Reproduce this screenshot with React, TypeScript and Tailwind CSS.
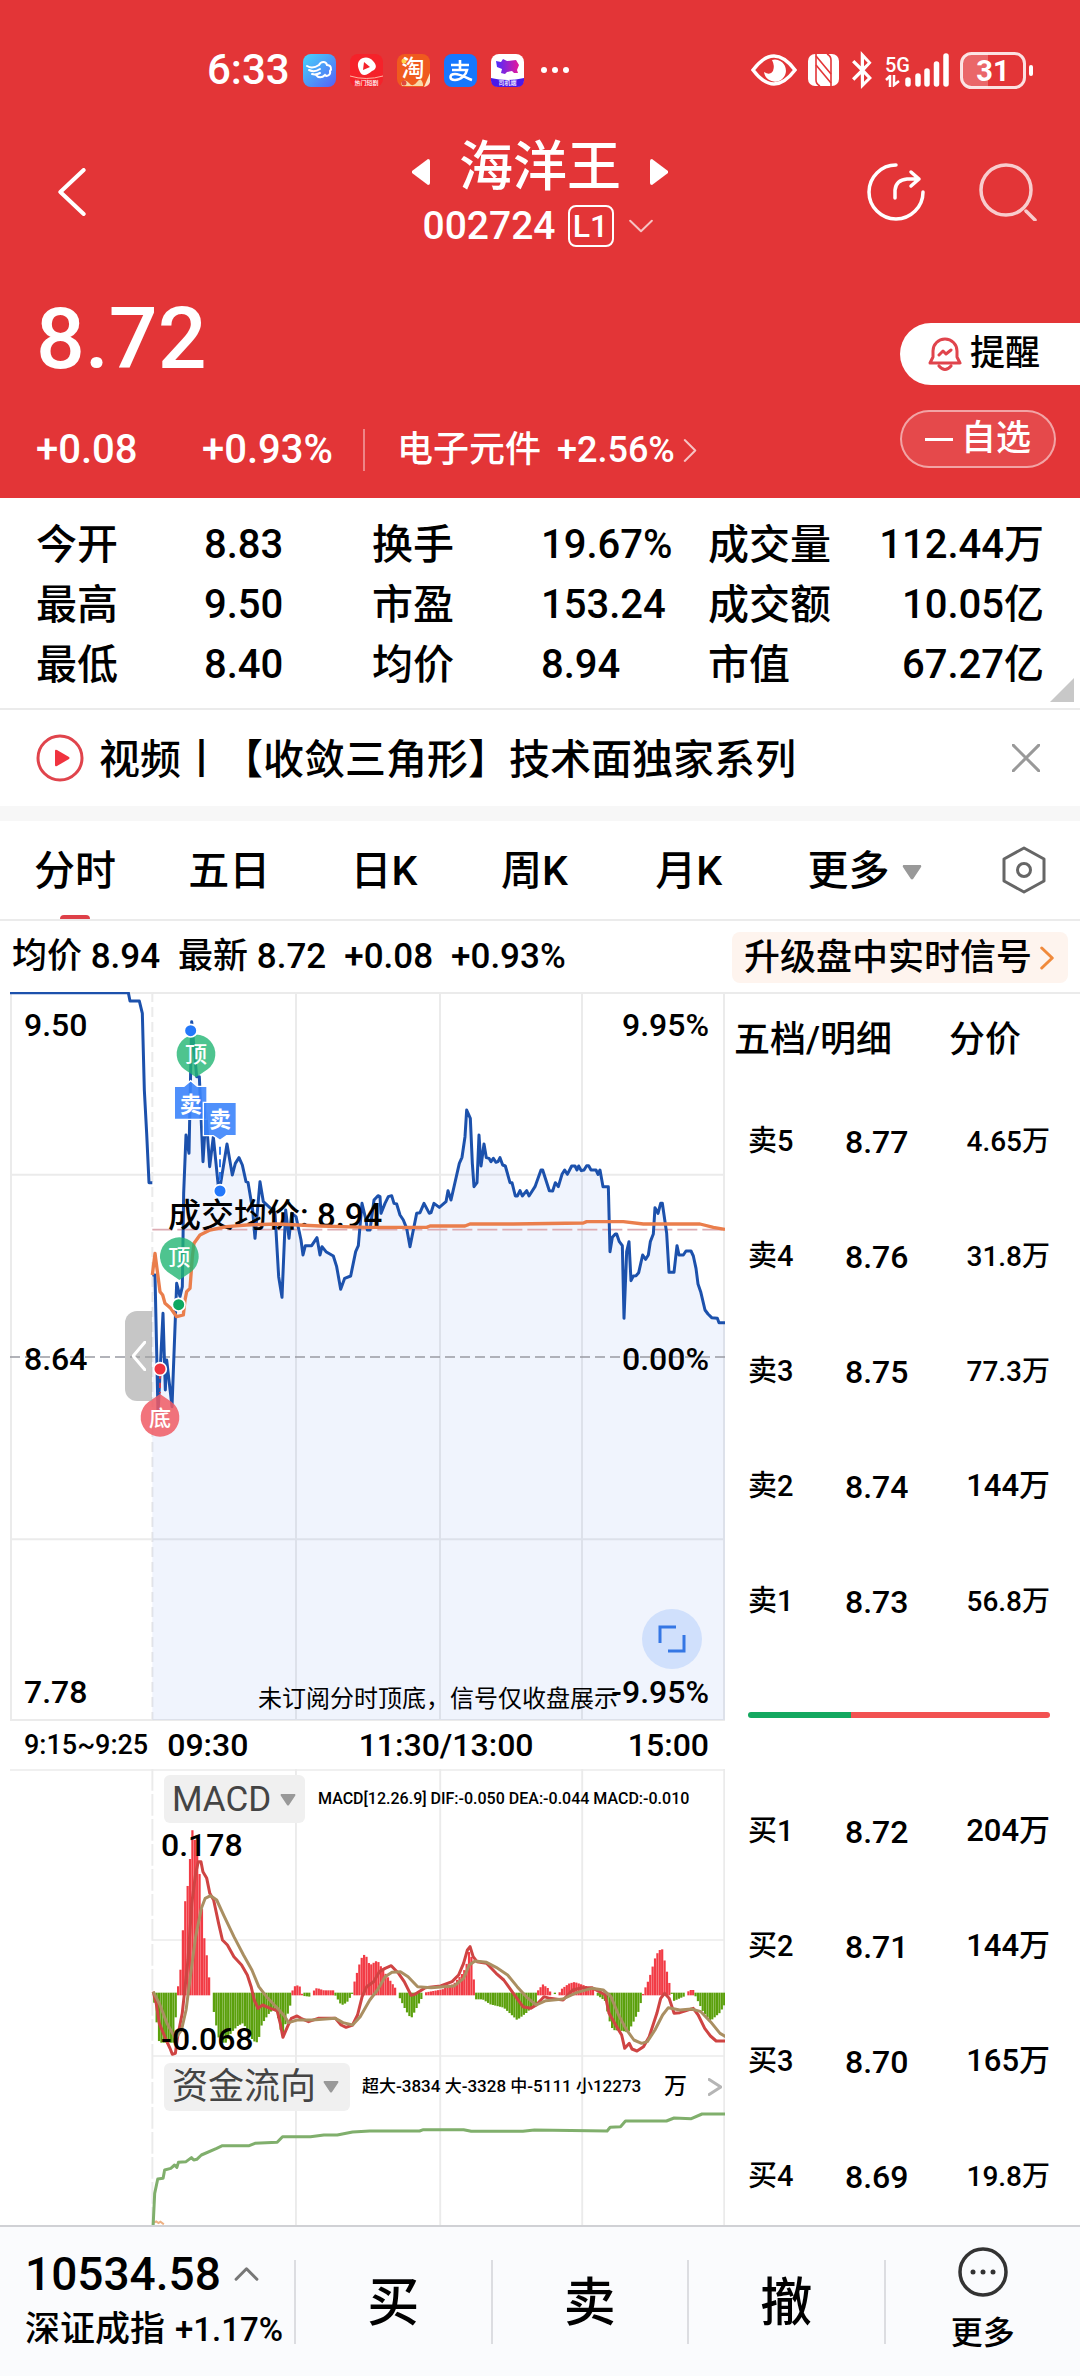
import React from 'react';
import { FaBluetoothB } from 'react-icons/fa';

const stats = [
  ['今开', '8.83', '换手', '19.67%', '成交量', '112.44万'],
  ['最高', '9.50', '市盈', '153.24', '成交额', '10.05亿'],
  ['最低', '8.40', '均价', '8.94', '市值', '67.27亿'],
];

const asks = [
  ['卖5', '8.77', '4.65万'],
  ['卖4', '8.76', '31.8万'],
  ['卖3', '8.75', '77.3万'],
  ['卖2', '8.74', '144万'],
  ['卖1', '8.73', '56.8万'],
];

const bids = [
  ['买1', '8.72', '204万'],
  ['买2', '8.71', '144万'],
  ['买3', '8.70', '165万'],
  ['买4', '8.69', '19.8万'],
];

// price line, three units per pixel
const auction = '27,38 385,38 390,63 418,63 427,100 433,330 440,460 447,608 457,608';
const price =
  '457,885 465,885 474,1300 489,1000 496,1230 500,1140 516,1280 530,910 540,950 547,920 551,640 558,465 567,520 575,125 590,290 598,290 609,545 618,400 629,560 640,470 655,620 662,610 681,492 697,585 706,550 717,533 727,555 738,605 744,607 758,690 765,775 780,605 790,665 812,685 825,700 836,890 846,952 857,690 867,775 875,700 888,710 903,780 909,825 916,797 935,797 951,773 960,825 966,800 978,815 1000,828 1010,860 1022,928 1034,895 1052,888 1067,815 1075,797 1086,670 1098,720 1102,750 1110,750 1122,660 1134,647 1140,650 1143,700 1155,670 1165,650 1175,647 1182,670 1190,672 1200,705 ' +
  '1210,720 1220,745 1230,800 1240,750 1250,700 1260,698 1272,670 1288,700 1293,698 1302,670 1318,682 1338,665 1344,632 1353,660 1378,550 1386,532 1395,470 1400,390 1411,415 1417,550 1422,620 1431,608 1437,465 1443,558 1452,492 1459,533 1467,535 1473,545 1480,535 1488,547 1494,545 1500,533 1508,555 1516,558 1530,608 1536,608 1546,648 1552,648 1560,632 1567,648 1580,632 1587,648 1605,620 1623,570 1628,570 1648,632 1658,633 1666,608 1675,620 1686,583 1694,570 1702,583 1715,558 1725,558 1731,570 1736,558 1744,572 1752,570 1760,557 1766,557 1773,570 1788,570 1794,583 1800,570 1809,620 1825,620 ' +
  '1830,815 1837,772 1846,762 1850,762 1858,785 1867,797 1872,1015 1880,815 1887,785 1893,902 1900,888 1908,887 1916,878 1928,825 1937,838 1945,825 1951,785 1960,762 1965,683 1974,700 1982,670 1987,670 2000,760 2007,877 2022,877 2031,797 2037,825 2050,825 2058,813 2073,813 2080,828 2088,865 2094,912 2102,935 2115,990 2124,1002 2135,1013 2152,1015 2157,1028 2177,1028';
const average =
  '457,885 465,820 480,935 488,945 495,970 512,985 530,1010 550,1005 555,960 560,935 570,925 577,830 582,790 600,765 630,750 680,740 740,735 830,732 960,738 1100,742 1280,742 1290,738 1395,738 1410,732 1540,732 1750,729 1760,725 1870,725 1930,732 2100,732 2140,742 2175,748';

// turning points of the MACD histogram: x, signed height
const macd: [number, number][] = [
  [34, 0], [40, -60], [50, -150], [88, -150], [92, -90], [97, -15], [100, 40], [106, 80], [112, 200], [120, 310], [127, 340], [133, 460], [138, 508], [146, 440], [152, 400], [159, 325], [164, 200], [170, 155], [177, 95], [183, 20], [187, 0],
  [190, -40], [200, -105], [208, -150], [225, -150], [238, -120], [255, -100], [268, -92], [280, -110], [295, -145], [308, -150], [318, -95], [335, -65], [348, -50], [358, -60], [372, -138], [384, -70], [392, -40], [396, 0],
  [400, 25], [410, 30], [420, 25], [424, 0], [428, -10], [444, -12], [448, 0], [456, 18], [462, 22], [480, 15], [505, 15], [510, -8], [526, -38], [540, -30], [552, -8], [556, 0],
  [560, 40], [572, 90], [582, 122], [590, 120], [600, 90], [620, 105], [635, 75], [650, 50], [668, 20], [672, 0], [680, -20], [695, -55], [708, -78], [725, -40], [738, -12], [742, 8], [790, 18], [820, 35], [845, 70], [855, 100], [862, 148], [870, 75], [874, 15],
  [878, -20], [895, -20], [915, -35], [950, -45], [985, -82], [1010, -60], [1035, -30], [1040, 15], [1052, 33], [1065, 22], [1075, 5], [1080, -6], [1092, 0], [1100, 18], [1120, 35], [1135, 40], [1160, 30], [1185, 18],
  [1190, -5], [1200, -12], [1215, -25], [1225, -80], [1235, -112], [1262, -115], [1275, -120], [1290, -85], [1305, -50], [1312, -5], [1316, 12], [1330, 50], [1345, 110], [1355, 135], [1364, 138], [1372, 95], [1384, 30], [1388, 0],
  [1394, -25], [1420, -12], [1428, 0], [1434, 16], [1446, 16], [1450, -8], [1470, -55], [1490, -85], [1515, -60], [1530, -30],
];
const dif =
  '34,695 42,730 50,790 68,840 78,865 84,883 92,880 98,830 110,760 125,600 135,430 145,340 152,305 159,305 164,335 174,355 182,400 192,420 205,490 215,540 228,555 245,590 265,615 280,645 290,680 298,720 308,745 320,735 340,745 358,752 366,790 373,832 385,800 395,775 410,768 420,775 440,785 465,775 510,775 525,795 538,802 555,795 568,765 580,710 592,680 610,665 625,635 640,625 656,617 675,640 690,665 708,706 718,703 745,683 785,678 815,665 832,645 845,610 855,570 862,560 870,590 880,605 905,610 930,640 950,660 975,700 1000,740 1020,745 1035,735 1055,710 1070,715 1105,720 1130,690 1155,683 1180,683 1200,695 1215,705 1225,760 1245,800 1258,825 1266,865 1278,850 1285,867 1298,873 1315,860 1330,830 1350,760 1360,715 1370,700 1382,715 1395,760 1410,758 1445,745 1458,765 1475,805 1490,828 1505,843 1530,843';
const dea =
  '34,695 50,730 70,790 92,835 108,810 120,750 130,660 145,530 160,445 170,415 184,407 200,420 220,470 245,530 270,585 292,630 310,680 330,710 355,740 375,765 388,788 410,780 450,780 510,775 530,788 555,795 575,770 600,720 620,690 640,650 658,637 680,635 700,650 725,680 760,683 820,678 845,655 860,615 875,603 905,607 930,622 960,645 985,680 1010,712 1035,735 1060,722 1105,717 1140,698 1180,685 1210,690 1230,710 1250,765 1270,808 1290,840 1310,850 1325,845 1345,810 1365,765 1380,743 1410,750 1440,747 1465,755 1490,785 1515,820 1530,830';
const flow =
  '34,1395 38,1300 46,1257 60,1255 64,1230 80,1225 90,1215 96,1222 100,1207 120,1205 134,1193 140,1200 148,1198 160,1185 200,1165 215,1157 285,1157 300,1150 358,1147 372,1130 445,1130 480,1125 515,1125 555,1116 600,1113 730,1113 740,1109 845,1109 865,1114 1000,1114 1030,1110 1220,1113 1228,1102 1255,1100 1268,1083 1375,1083 1395,1074 1440,1076 1468,1062 1530,1062';

function heightAt(x: number) {
  for (let i = 1; i < macd.length; i++) {
    const [x0, h0] = macd[i - 1];
    const [x1, h1] = macd[i];
    if (x <= x1) return h0 + ((h1 - h0) * (x - x0)) / (x1 - x0);
  }
  return 0;
}

const bars = Array.from({ length: 240 }, (_, i) => {
  const x = 37 + i * 6.23;
  return { x, h: heightAt(x) };
});

function Chevron({ d, className, width = 2 }: { d: string; className: string; width?: number }) {
  return (
    <svg viewBox="0 0 24 24" className={className} fill="none" stroke="currentColor" strokeWidth={width} strokeLinecap="round" strokeLinejoin="round" preserveAspectRatio="none" aria-hidden="true">
      <path d={d} vectorEffect="non-scaling-stroke" />
    </svg>
  );
}

function AppIcons() {
  return (
    <div className="flex items-center gap-[14px]">
      <svg viewBox="0 0 33 33" className="size-[33px]">
        <defs>
          <linearGradient id="wing" x1="0" y1="0" x2="1" y2="1">
            <stop offset="0" stopColor="#46d5fb" />
            <stop offset="1" stopColor="#5560f5" />
          </linearGradient>
        </defs>
        <rect width="33" height="33" rx="8" fill="url(#wing)" />
        <path d="M4 12c5 3 9 1 12-1M6 16c4 2 8 1 11-1M9 20c3 1 6 0 8-1M16 11c2-4 7-4 8 0 4 0 5 4 3 6 1 4-3 6-5 4-3 3-7 3-9 0" fill="none" stroke="#fff" strokeWidth="2" strokeLinecap="round" />
      </svg>
      <svg viewBox="0 0 33 33" className="size-[33px]">
        <rect width="33" height="33" rx="8" fill="#f5222a" />
        <path d="M9 7c4-5 11-4 14 0 4 4 4 8-1 10-4 4-10 6-12 1-2-4-3-8-1-11z" fill="#fff" />
        <path d="M14 8l6 5-7 3z" fill="#f5222a" />
        <path d="M0 22q16 5 33 0" stroke="#ffb2a0" fill="none" />
        <text x="16.500" y="31" textAnchor="middle" fontSize="6" fill="#fff">热门短剧</text>
      </svg>
      <svg viewBox="0 0 33 33" className="size-[33px]">
        <rect width="33" height="33" rx="8" fill="#f05a1e" />
        <circle cx="7" cy="7" r="2.500" fill="#ffd24a" />
        <path d="M27 33l6-14v9q-1 4-6 5z" fill="#ffe2c4" />
        <text x="16" y="22" textAnchor="middle" fontSize="23" fontWeight="500" fill="#fff">淘</text>
        <path d="M4 29q4-5 8 0t8-1 6 2v2H5z" fill="#f7d9a8" />
        <circle cx="7" cy="29" r="2.500" fill="#e0463c" />
      </svg>
      <svg viewBox="0 0 33 33" className="size-[33px]">
        <rect width="33" height="33" rx="8" fill="#1677ff" />
        <path d="M7 11h18M16 6v10M8 16h15c-1 5-6 10-12 10-6 0-6-6 0-6 6 0 11 4 17 6" fill="none" stroke="#fff" strokeWidth="2.600" />
      </svg>
      <svg viewBox="0 0 33 33" className="size-[33px]">
        <defs>
          <linearGradient id="ox">
            <stop offset="0" stopColor="#4b2bff" />
            <stop offset="1" stopColor="#e6189b" />
          </linearGradient>
        </defs>
        <rect width="33" height="33" rx="8" fill="#fff" />
        <path d="M5 7l5 1 2-3 4 2 9-1 3 5-2 5 1 3h-4l-2-2-5 1-2 2-4-1 1-4-5-2z" fill="url(#ox)" />
        <path d="M0 24q16 4 33 0v3q-1 6-7 6H7q-6 0-7-6z" fill="#4a18e8" />
        <text x="16.500" y="31" textAnchor="middle" fontSize="6" fill="#fff">司机端</text>
      </svg>
    </div>
  );
}

function StatusBar() {
  return (
    <div className="flex h-[136px] items-center justify-between pt-1 pr-[46px] pl-[207px]">
      <div className="flex items-center gap-[13px]">
        <span className="text-[42px] leading-none font-medium">6:33</span>
        <AppIcons />
        <svg viewBox="0 0 28 6" className="ml-1 h-[6px] w-[28px]" fill="currentColor">
          <circle cx="3" cy="3" r="3" />
          <circle cx="14" cy="3" r="3" />
          <circle cx="25" cy="3" r="3" />
        </svg>
      </div>
      <div className="flex items-center gap-[11px]">
        <svg viewBox="0 0 46 32" className="h-[32px] w-[46px]">
          <path d="M2 16Q23-12 44 16Q23 44 2 16z" fill="none" stroke="#fff" strokeWidth="3.500" />
          <path d="M21 6a11 11 0 1 1-8 12q6 4 9-1 2-5-1-11z" fill="#fff" />
        </svg>
        <svg viewBox="0 0 31 32" className="h-[32px] w-[31px]">
          <rect width="31" height="32" rx="7" fill="#fff" />
          <path d="M8 0v26q0 4 4 6M23 32V6q0-4-4-6" stroke="#e33537" strokeWidth="1.600" fill="none" />
          <path d="M8 2l15 18M8 11l15 18" stroke="#e33537" strokeWidth="1.600" />
        </svg>
        <FaBluetoothB className="h-[38px] w-[24px]" />
        <div className="flex items-end">
          <div className="flex flex-col items-start">
            <span className="text-[20px] leading-[20px] font-medium">5G</span>
            <svg viewBox="0 0 15 12" className="h-[12px] w-[15px]" fill="none" stroke="#fff" strokeWidth="2.500">
              <path d="M1 5l4-4v11M9 0v10l5-4" />
            </svg>
          </div>
          <svg viewBox="0 0 44 34" className="-ml-[5px] h-[34px] w-[44px]" stroke="#fff" strokeWidth="5.500" strokeLinecap="round">
            <path d="M3 31v-4M13 31v-8M22 31V18M31.500 31V11M41 31V3" />
          </svg>
        </div>
        <svg viewBox="0 0 74 37" className="h-[37px] w-[74px]">
          <path d="M12 1.500h16v34H12q-10 0-10-10v-14q0-10 10-10z" fill="#fff" fillOpacity=".25" />
          <rect x="1.500" y="1.500" width="63" height="34" rx="10" fill="none" stroke="#fff" strokeOpacity=".85" strokeWidth="3" />
          <rect x="69" y="13" width="4" height="11" rx="2" fill="#fff" />
          <text x="33" y="29" textAnchor="middle" fontSize="29" fontWeight="700" fill="#fff">31</text>
        </svg>
      </div>
    </div>
  );
}

function TitleBar() {
  return (
    <div className="grid h-[116px] grid-cols-[1fr_auto_1fr] items-center">
      <div className="pb-2 pl-[58px]">
        <button aria-label="返回" className="block">
          <Chevron d="M22 1L2 12l20 11" width={4} className="h-[48px] w-[28px]" />
        </button>
      </div>
      <div className="flex flex-col items-center pt-1">
        <div className="flex h-[56px] items-center gap-[29px]">
          <button aria-label="上一只">
            <svg viewBox="0 0 18 26" className="mt-2 h-[26px] w-[18px]" fill="currentColor"><path d="M16 0q2 0 2 2v22q0 2-2 2L0 14v-2z" /></svg>
          </button>
          <h1 className="text-[54px] leading-[56px] font-medium">海洋王</h1>
          <button aria-label="下一只">
            <svg viewBox="0 0 18 26" className="mt-2 h-[26px] w-[18px]" fill="currentColor"><path d="M2 0Q0 0 0 2v22q0 2 2 2l16-12v-2z" /></svg>
          </button>
        </div>
        <div className="flex h-[60px] items-center">
          <span className="text-[39px] font-medium">002724</span>
          <span className="ml-3 flex h-[42px] w-[46px] items-center justify-center rounded-lg border-2 text-[32px] leading-none">L1</span>
          <Chevron d="M2 3l10 18L22 3" className="mr-1 ml-[14px] h-[14px] w-[26px] opacity-70" />
        </div>
      </div>
      <div className="flex items-center justify-end gap-[54px] pr-[43px] pb-2">
        <button aria-label="分享">
          <svg viewBox="0 0 58 58" className="size-[58px]" fill="none" stroke="currentColor" strokeWidth="3.500" strokeLinecap="round" strokeLinejoin="round">
            <path d="M29 2A27 27 0 1 0 56 29" />
            <path d="M28 35v-8q1-10 12-11h12M44 9l8 7-8 7" />
          </svg>
        </button>
        <button aria-label="搜索">
          <svg viewBox="0 0 58 58" className="size-[58px] opacity-75" fill="none" stroke="currentColor" strokeWidth="3.500" strokeLinecap="round">
            <circle cx="27" cy="27" r="25" />
            <path d="M47 48l9 9" />
          </svg>
        </button>
      </div>
    </div>
  );
}

function Quote() {
  return (
    <div className="flex h-[246px] justify-between pl-[36px]">
      <div className="pt-[44px]">
        <p className="text-[86px] leading-[86px] font-medium">8.72</p>
        <div className="mt-[46px] flex h-[44px] items-center text-[40px] leading-[44px]">
          <span className="w-[166px]">+0.08</span>
          <span>+0.93%</span>
          <span className="ml-[30px] h-[42px] w-[2px] bg-white/40" />
          <a href="#sector" className="ml-[32px] flex items-center">
            <span className="text-[36px]">电子元件</span>
            <span className="ml-4 text-[36px]">+2.56%</span>
            <Chevron d="M3 2l18 10L3 22" className="ml-[8px] h-[25px] w-[14px] opacity-70" />
          </a>
        </div>
      </div>
      <div className="flex flex-col items-start gap-[25px] pt-[71px]">
        <button className="flex h-[62px] w-[180px] items-center gap-2 rounded-l-full bg-white pl-[28px] text-[35px] text-black">
          <svg viewBox="0 0 34 36" className="h-[36px] w-[34px]" fill="none" stroke="#e0444c" strokeWidth="3" strokeLinejoin="round" strokeLinecap="round">
            <path d="M2 27l3-6v-6a12 12 0 0 1 24 0v6l3 6zM11 30q6 7 12 0M11 19l4-4 3 3 5-4" />
          </svg>
          提醒
        </button>
        <button className="flex h-[58px] w-[156px] items-center justify-center gap-2 rounded-full border-2 border-white/50 bg-white/10 text-[35px]">
          <span className="h-[3px] w-[28px] bg-white" />
          自选
        </button>
      </div>
    </div>
  );
}

function PriceChart() {
  return (
    <div className="relative text-[32px] leading-[36px]">
      <svg viewBox="30 36 2145 2187" className="block h-auto w-full" fill="none">
        <g stroke="#ebebeb" strokeWidth="6">
          <path d="M30 39H2175M30 584H2175M30 1678H2175M30 2220H2175" />
          <path d="M33 36V2223M888 36V2223M1320 36V2223M1746 36V2223M2172 36V2223" />
          <path d="M457 36V2223" strokeDasharray="30 15" />
        </g>
        <polygon points={`${price} 2177,2220 457,2220`} fill="#2464e6" fillOpacity=".07" />
        <path d="M30 1131H2175" stroke="#999ba3" strokeWidth="5" strokeDasharray="30 15" />
        <path d="M457 749H2175" stroke="#dcaab2" strokeWidth="5" strokeDasharray="60 15" />
        <polyline points={auction} stroke="#1c51ac" strokeWidth="9" strokeLinejoin="round" />
        <polyline points={price} stroke="#1c51ac" strokeWidth="9" strokeLinejoin="round" />
      </svg>
      <span className="absolute top-[206px] left-[158px] text-[33px]">成交均价: 8.94</span>
      <svg viewBox="30 36 2145 2187" className="absolute inset-0 h-full w-full" fill="none">
        <polyline points={average} stroke="#ea7e4c" strokeWidth="10" strokeLinejoin="round" />
        <path d="M660 500V610" stroke="#2c7bf2" strokeWidth="6" strokeDasharray="24 14" />
        <path d="M480 1180V1240" stroke="#f0333f" strokeWidth="5" strokeDasharray="16 12" />
        <g fill="#22b573" fillOpacity=".8">
          <path d="M588 292L553 268A58 58 0 1 1 623 268Z" />
          <path d="M538 900L503 876A58 58 0 1 1 573 876Z" />
        </g>
        <path d="M480 1242L445 1266A58 58 0 1 0 515 1266Z" fill="#f05a64" fillOpacity=".85" />
        <g fill="#3c84fb" fillOpacity=".9" stroke="#fff" strokeWidth="4">
          <path d="M523 319H552L572 302L592 319H621V418H523Z" />
          <path d="M610 367H709V467H680L660 481L640 467H610Z" />
        </g>
        <g fill="#fff" fontSize="66" fontWeight="500" textAnchor="middle">
          <text x="588" y="247">顶</text>
          <text x="538" y="855">顶</text>
          <text x="480" y="1337">底</text>
          <text x="572" y="395" fontWeight="700">卖</text>
          <text x="660" y="442" fontWeight="700">卖</text>
        </g>
        <g stroke="#fff" strokeWidth="5">
          <circle cx="572" cy="152" r="19" fill="#2478fa" />
          <circle cx="660" cy="633" r="19" fill="#2478fa" />
          <circle cx="536" cy="974" r="19" fill="#0fa860" />
          <circle cx="480" cy="1167" r="19" fill="#f0333f" />
        </g>
      </svg>
      <span className="absolute top-[15px] left-[14px]">9.50</span>
      <span className="absolute top-[349px] left-[14px]">8.64</span>
      <span className="absolute bottom-[11px] left-[14px]">7.78</span>
      <span className="absolute top-[15px] right-4">9.95%</span>
      <span className="absolute top-[349px] right-4">0.00%</span>
      <span className="absolute right-4 bottom-[11px]">-9.95%</span>
      <span className="absolute right-[107px] bottom-1 text-[24px] font-normal">未订阅分时顶底，信号仅收盘展示</span>
      <button aria-label="收起竞价" className="absolute top-[319px] left-[115px] flex h-[90px] w-[27px] items-center justify-center rounded-l-xl bg-[#a0a0a0]/60 text-white">
        <Chevron d="M22 1L2 12l20 11" width={3} className="h-[30px] w-[14px]" />
      </button>
      <button aria-label="全屏" className="absolute right-[23px] bottom-[52px] flex size-[60px] items-center justify-center rounded-full bg-[#d0e0fc]">
        <svg viewBox="0 0 28 28" className="size-[28px]" fill="none" stroke="#3577e4" strokeWidth="3">
          <path d="M18 2H2v16M10 26h16V10" />
        </svg>
      </button>
    </div>
  );
}

function Caret({ className = 'h-[12px] w-[16px]' }: { className?: string }) {
  return (
    <svg viewBox="0 0 16 12" className={className} fill="#999"><path d="M1 0h14q1 1 0 2L9 11q-1 1-2 0L1 2Q0 1 1 0z" /></svg>
  );
}

function Charts() {
  return (
    <section className="min-w-0 flex-1 pl-[10px]">
      <PriceChart />
      <div className="flex h-[48px] items-center justify-between pr-4 pl-[14px] text-[32px]">
        <div className="flex items-center gap-[19px]">
          <span className="text-[27px]">9:15~9:25</span>
          <span>09:30</span>
        </div>
        <span className="pl-4">11:30/13:00</span>
        <span>15:00</span>
      </div>
      <div className="relative">
        <svg viewBox="-340 27 1868 864" className="block h-[288px] w-full" preserveAspectRatio="none" fill="none">
          <g stroke="#ebebeb" strokeWidth="5">
            <path d="M-340 30H1528M32 540H1528M32 888H1528M407 27V891M784 27V891M1155 27V891M1526 27V891" />
            <path d="M32 27V891" strokeDasharray="65 10" />
          </g>
          {bars.map(b => (
            <rect key={b.x} x={b.x - 3} y={b.h > 0 ? 706 - b.h : 698} width="5.800" height={Math.abs(b.h) > 3 ? Math.abs(b.h) : 0} fill={b.h > 0 ? '#f23b45' : '#5ba00c'} />
          ))}
          <polyline points={dif} stroke="#cf4443" strokeWidth="3" vectorEffect="non-scaling-stroke" strokeLinejoin="round" />
          <polyline points={dea} stroke="#aa8f62" strokeWidth="3" vectorEffect="non-scaling-stroke" strokeLinejoin="round" />
        </svg>
        <div className="absolute top-[6px] left-[154px] flex items-center gap-[13px]">
          <button className="flex h-[48px] w-[141px] items-center gap-[9px] rounded-md bg-[#f0f0f0] pt-[2px] pl-2 text-[35px] font-normal text-[#444]">
            MACD
            <Caret />
          </button>
          <span className="text-[16px] whitespace-pre">MACD[12.26.9] DIF:-0.050 DEA:-0.044 MACD:-0.010</span>
        </div>
        <span className="absolute top-[58px] left-[151px] text-[32px] leading-[36px]">0.178</span>
        <span className="absolute bottom-0 left-[151px] text-[32px] leading-[36px]">-0.068</span>
      </div>
      <div className="relative">
        <svg viewBox="-340 891 1868 504" className="block h-[168px] w-full" preserveAspectRatio="none" fill="none">
          <g stroke="#ebebeb" strokeWidth="5">
            <path d="M407 891V1395M784 891V1395M1155 891V1395M1526 891V1395" />
            <path d="M32 891V1395" strokeDasharray="65 10" />
          </g>
          <path d="M36 1388l6-4 6 5 5-4 9 8" stroke="#eeb183" strokeWidth="2" vectorEffect="non-scaling-stroke" />
          <polyline points={flow} stroke="#80af6c" strokeWidth="3" vectorEffect="non-scaling-stroke" strokeLinejoin="round" />
        </svg>
        <div className="absolute top-[6px] right-[3px] left-[154px] flex items-center">
          <button className="flex h-[48px] w-[186px] items-center gap-[7px] rounded-md bg-[#f0f0f0] pl-2 text-[36px] font-normal text-[#444]">
            资金流向
            <Caret />
          </button>
          <span className="ml-3 text-[17px] whitespace-pre">超大-3834 大-3328 中-5111 小12273</span>
          <span className="mr-[21px] ml-auto text-[23px]">万</span>
          <Chevron d="M2 2l20 10L2 22" width={3} className="h-[18px] w-[14px] text-[#b5b5b5]" />
        </div>
      </div>
    </section>
  );
}

function Levels({ rows, label }: { rows: string[][]; label: string }) {
  return (
    <table aria-label={label} className="w-full table-fixed">
      <tbody>
        {rows.map(([name, value, volume]) => (
          <tr key={name} className="h-[115px]">
            <th scope="row" className="w-[97px] p-0 text-left text-[29px] font-medium">{name}</th>
            <td className="p-0 text-[32px]">{value}</td>
            <td className={volume.includes('.') ? 'p-0 text-right text-[28px]' : 'p-0 text-right text-[31px]'}>{volume}</td>
          </tr>
        ))}
      </tbody>
    </table>
  );
}

function OrderBook() {
  return (
    <aside className="w-[355px] border-t-2 border-[#ebebeb] pl-[9px]">
      <div className="flex h-[90px] items-center gap-[57px] pt-[2px] text-[36px]">
        <button>五档/明细</button>
        <button>分价</button>
      </div>
      <div className="pr-[30px] pl-[14px]">
        <Levels rows={asks} label="卖盘" />
        <div className="flex h-[115px] items-center pb-1">
          <span className="h-[6px] w-[34%] rounded-l-full bg-[#14a860]" />
          <span className="h-[6px] flex-1 rounded-r-full bg-[#f25252]" />
        </div>
        <Levels rows={bids} label="买盘" />
      </div>
    </aside>
  );
}

export default function App() {
  return (
    <div className="flex h-screen flex-col overflow-hidden bg-white font-['Roboto','Noto_Sans_CJK_SC',sans-serif] font-medium text-black">
      <header className="shrink-0 bg-[#e33537] text-white">
        <StatusBar />
        <TitleBar />
        <Quote />
      </header>

      <div className="relative shrink-0 border-b-2 border-[#ebebeb] pt-[17px] pr-[36px] pb-[13px] pl-[36px]">
        <dl className="grid grid-cols-[168fr_168fr_169fr_167fr_125fr_211fr] text-[40px] leading-[60px]">
          {stats.flat().map((text, i) =>
            i % 2 === 0 ? (
              <dt key={i} className="text-[41px] whitespace-nowrap">{text}</dt>
            ) : (
              <dd key={i} className={i % 6 === 5 ? 'text-right whitespace-nowrap' : 'whitespace-nowrap'}>{text}</dd>
            )
          )}
        </dl>
        <svg viewBox="0 0 24 24" className="absolute right-[6px] bottom-[6px] size-[24px]" fill="#c8c8c8"><path d="M24 0v24H0z" /></svg>
      </div>

      <div className="flex h-[96px] shrink-0 items-center pr-[40px] pl-[36px]">
        <svg viewBox="0 0 48 48" className="size-[48px]">
          <circle cx="24" cy="24" r="22" fill="none" stroke="#e0444c" strokeWidth="3" />
          <path d="M19 17q0-2 2-1l12 7q1 1 0 2l-12 7q-2 1-2-1z" fill="#f0333f" />
        </svg>
        <a href="#video" className="ml-[15px] pt-1 text-[41px] leading-none">视频丨【收敛三角形】技术面独家系列</a>
        <button aria-label="关闭" className="ml-auto text-[#999]">
          <Chevron d="M1 1l22 22M23 1L1 23" width={3} className="size-[28px]" />
        </button>
      </div>
      <div className="h-[15px] shrink-0 bg-[#f7f7f7]" />

      <nav className="grid h-[100px] shrink-0 grid-cols-[154fr_162fr_150fr_154fr_152fr_194fr_46fr] items-center justify-items-start border-b-2 border-[#ebebeb] pr-[32px] pl-[34px] text-[41px]">
        <button className="relative flex h-[98px] items-center pt-1">
          分时
          <span className="absolute bottom-0 left-1/2 h-1 w-[30px] -translate-x-1/2 rounded-t-sm bg-[#de4048]" />
        </button>
        <button className="pt-1">五日</button>
        <button className="pt-1">日K</button>
        <button className="pt-1">周K</button>
        <button className="pt-1">月K</button>
        <button className="flex items-center gap-3 pt-1">更多<Caret className="h-[15px] w-[20px]" /></button>
        <button aria-label="设置">
          <svg viewBox="0 0 44 48" className="h-[48px] w-[44px]" fill="none" stroke="#666" strokeWidth="3" strokeLinejoin="round">
            <path d="M22 2l20 11v22L22 46 2 35V13z" />
            <circle cx="22" cy="24" r="6.500" />
          </svg>
        </button>
      </nav>

      <div className="flex h-[71px] shrink-0 items-center justify-between pt-[2px] pr-3 pl-3">
        <div className="flex gap-[18px] text-[35px]">
          <span>均价 8.94</span>
          <span>最新 8.72</span>
          <span>+0.08</span>
          <span>+0.93%</span>
        </div>
        <button className="flex h-[51px] w-[336px] items-center gap-2 rounded-lg bg-[#fef4ee] pl-3 text-[36px]">
          升级盘中实时信号
          <Chevron d="M3 2l18 10L3 22" width={3} className="h-[24px] w-[14px] text-[#f08a3c]" />
        </button>
      </div>

      <main className="flex min-h-0 flex-1 overflow-hidden">
        <Charts />
        <OrderBook />
      </main>

      <footer className="flex h-[151px] shrink-0 items-center border-t-2 border-[#d0d1d5] bg-[#fafbfd]">
        <a href="#index" className="w-[294px] shrink-0 pl-[25px] whitespace-nowrap">
          <span className="flex items-center gap-[13px] text-[46px] leading-[56px]">
            10534.58
            <Chevron d="M2 21L12 3l10 18" width={3} className="h-[14px] w-[25px] text-[#777]" />
          </span>
          <span className="flex items-center gap-[10px] text-[35px] leading-[56px]">
            深证成指
            <span className="text-[33px]">+1.17%</span>
          </span>
        </a>
        <div className="grid flex-1 grid-cols-4">
          {['买', '卖', '撤'].map(t => (
            <button key={t} className="h-[84px] border-l-2 border-[#dcdde1] pt-1 text-[52px] font-medium">{t}</button>
          ))}
          <button className="flex h-[84px] flex-col items-center justify-center border-l-2 border-[#dcdde1] text-[32px] leading-[48px]">
            <svg viewBox="0 0 50 50" className="size-[50px] shrink-0">
              <circle cx="25" cy="25" r="23" fill="none" stroke="#333" strokeWidth="3.500" />
              <g fill="#333">
                <circle cx="15" cy="25" r="2.500" />
                <circle cx="25" cy="25" r="2.500" />
                <circle cx="35" cy="25" r="2.500" />
              </g>
            </svg>
            <span className="mt-3">更多</span>
          </button>
        </div>
      </footer>
    </div>
  );
}
